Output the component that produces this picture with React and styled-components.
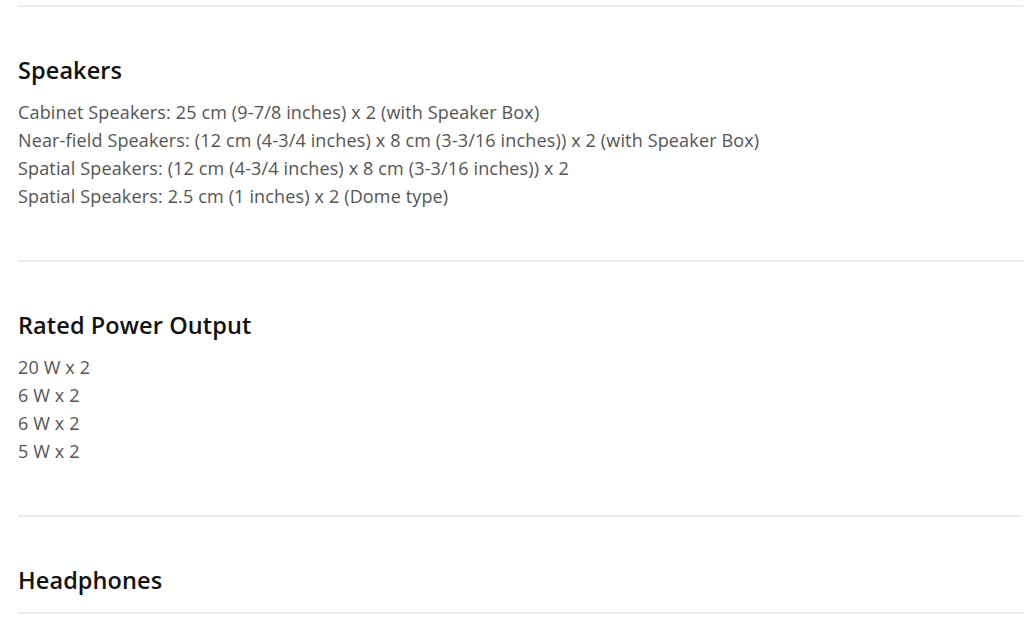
import styled, { createGlobalStyle } from 'styled-components';

const GlobalStyle = createGlobalStyle`
  body {
    margin: 0;
    background: #fff;
    font-family: "Open Sans", "Liberation Sans", sans-serif;
  }
`;

const SpecList = styled.div`
  padding: 5px 1px 0 18px;
`;

const Section = styled.section`
  border-top: 2px solid #ececec;
  padding: 48px 0 ${(props) => (props.$open ? '50px' : '0')};
`;

const Title = styled.h3`
  margin: 0 0 ${(props) => (props.$gap ? '17px' : '13px')};
  font-size: 23.5px;
  line-height: 30px;
  font-weight: 600;
  letter-spacing: 0.1px;
  color: #111;
`;

const Line = styled.p`
  margin: 0;
  font-size: 18px;
  line-height: 28px;
  letter-spacing: 0.15px;
  color: #555;
`;

const SubRow = styled.div`
  border-top: 2px solid #ececec;
  height: 24px;
`;

const specs = [
  {
    title: 'Speakers',
    lines: [
      'Cabinet Speakers: 25 cm (9-7/8 inches) x 2 (with Speaker Box)',
      'Near-field Speakers: (12 cm (4-3/4 inches) x 8 cm (3-3/16 inches)) x 2 (with Speaker Box)',
      'Spatial Speakers: (12 cm (4-3/4 inches) x 8 cm (3-3/16 inches)) x 2',
      'Spatial Speakers: 2.5 cm (1 inches) x 2 (Dome type)',
    ],
  },
  {
    title: 'Rated Power Output',
    lines: ['20 W x 2', '6 W x 2', '6 W x 2', '5 W x 2'],
  },
];

const App = () => (
  <>
    <GlobalStyle />
    <SpecList>
      {specs.map((spec) => (
        <Section key={spec.title} $open>
          <Title>{spec.title}</Title>
          {spec.lines.map((line, i) => (
            <Line key={i}>{line}</Line>
          ))}
        </Section>
      ))}
      <Section>
        <Title $gap>Headphones</Title>
        <SubRow />
      </Section>
    </SpecList>
  </>
);

export default App;
